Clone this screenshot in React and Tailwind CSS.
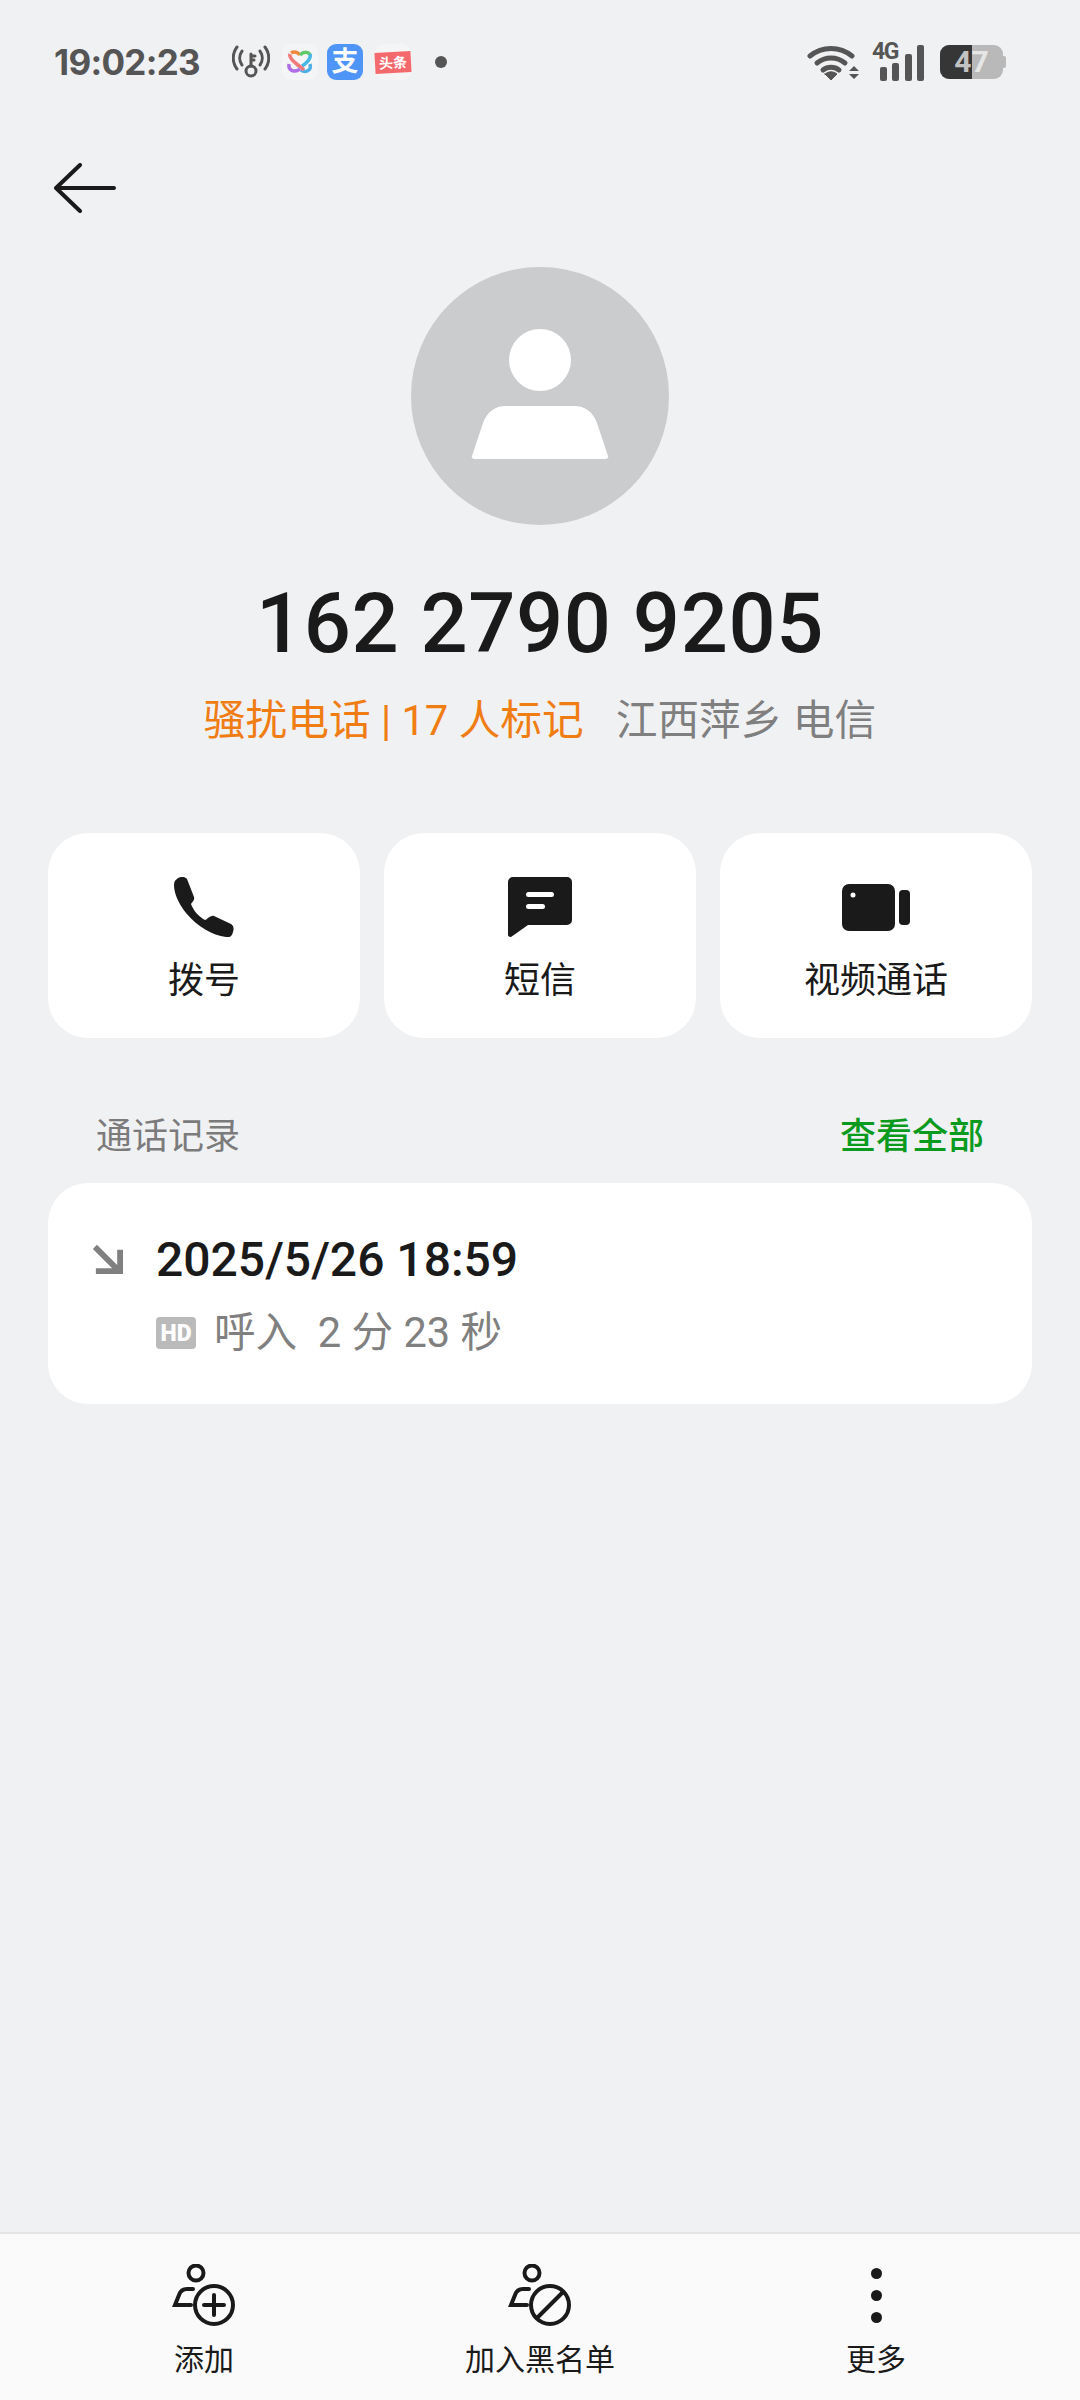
const CJK = "font-['Roboto','Noto_Sans_CJK_SC',sans-serif]"

function StatusBar() {
  return (
    <div className="flex h-[124px] items-center justify-between pl-[54px] pr-[74px]">
      <div className="flex items-center">
        <span className="w-[178px] font-['Inter',sans-serif] text-[35px] font-bold leading-none tracking-[-0.7px] text-[#555555]">19:02:23</span>
        {/* hotspot key */}
        <svg width="38" height="34" viewBox="0 0 38 34" fill="none" stroke="#555" strokeWidth="3" strokeLinecap="round">
          <circle cx="19" cy="26" r="5" />
          <path d="M19 21V9M19 11h4M19 15h3" />
          <path d="M10 6a12 12 0 0 0 0 14M5 2a18 18 0 0 0 0 22M28 6a12 12 0 0 1 0 14M33 2a18 18 0 0 1 0 22" />
        </svg>
        {/* colourful app icon */}
        <svg className="ml-[12px]" width="36" height="36" viewBox="0 0 36 36" fill="none" strokeWidth="3.5">
          <rect width="36" height="36" rx="9" fill="#f4f5f6" />
          <path d="M9 9c5-3 9 2 9 2" stroke="#f08a3c" />
          <path d="M18 11c4-4 9-3 10 0" stroke="#62c96a" />
          <path d="M28 10c2 6-8 12-8 12" stroke="#47b7e8" />
          <path d="M28 20c2 7-5 9-9 6" stroke="#4fb0e8" />
          <path d="M8 10c-2 5 10 12 14 16" stroke="#f07a7a" />
          <path d="M7 20c-1 7 6 9 11 5" stroke="#b06ee8" />
        </svg>
        {/* alipay */}
        <div className={`ml-[9px] flex h-[36px] w-[36px] items-center justify-center rounded-[9px] bg-[#4f94f7] text-[27px] font-bold leading-none text-white ${CJK}`}>支</div>
        {/* toutiao */}
        <div className="ml-[12px] flex h-[36px] w-[36px] items-center rounded-[9px] bg-[#f5f5f6]">
          <div className={`flex h-[21px] w-[36px] -rotate-3 items-center justify-center bg-[#f46a6c] text-[14px] font-bold leading-none text-white ${CJK}`}>头条</div>
        </div>
        <div className="ml-[24px] h-[12px] w-[12px] rounded-full bg-[#555555]" />
      </div>
      <div className="flex items-center">
        {/* wifi */}
        <svg width="52" height="38" viewBox="0 0 52 38" fill="none" stroke="#555" strokeWidth="5" strokeLinecap="round">
          <path d="M3 13a33 33 0 0 1 42 0" />
          <path d="M10 20a22 22 0 0 1 28 0" />
          <path d="M16 27a13 13 0 0 1 16 0" />
          <path d="M18 31l6 6 6-6a9 9 0 0 0-12 0z" fill="#555" strokeWidth="1" />
          <path d="M42 28l5-5 5 5zM42 31l5 5 5-5z" fill="#555" stroke="none" />
        </svg>
        {/* signal */}
        <div className="relative ml-[13px] h-[38px] w-[52px]">
          <span className="absolute left-0 top-[-3px] font-['Roboto',sans-serif] text-[23px] font-bold leading-none tracking-[-1.5px] text-[#555555]">4G</span>
          <div className="flex h-full items-end justify-end gap-[5.5px]">
            <div className="h-[14px] w-[7px] rounded-[2px] bg-[#555555]" />
            <div className="h-[18px] w-[7px] rounded-[2px] bg-[#555555]" />
            <div className="h-[27px] w-[7px] rounded-[2px] bg-[#555555]" />
            <div className="h-[36px] w-[7px] rounded-[2px] bg-[#555555]" />
          </div>
        </div>
        {/* battery */}
        <div className="relative ml-[16px] flex h-[34px] w-[63px] overflow-hidden rounded-[9px] bg-[#b9b9b9]">
          <div className="h-full w-[32px] bg-[#363636]" />
          <span className="absolute inset-0 flex items-center justify-center font-['Roboto',sans-serif] text-[30px] font-bold leading-none">
            <span className="text-[#c2c2c2]">4</span>
            <span className="text-[#e6e6e6]">7</span>
          </span>
        </div>
        <div className="h-[12px] w-[3px] rounded-r-[2px] bg-[#b9b9b9]" />
      </div>
    </div>
  )
}

function ActionCard({ icon, label }) {
  return (
    <div className="flex h-[205px] flex-col items-center rounded-[40px] bg-white">
      <div className="flex h-[108px] items-end justify-center pb-[4px]">{icon}</div>
      <span className={`mt-[18px] text-[36px] leading-[44px] text-[#1a1a1a] ${CJK}`}>{label}</span>
    </div>
  )
}

function BottomAction({ icon, label }) {
  return (
    <div className="flex flex-col items-center">
      <div className="flex h-[62px] items-center justify-center">{icon}</div>
      <span className={`mt-[14px] text-[30px] leading-[40px] text-[#1a1a1a] ${CJK}`}>{label}</span>
    </div>
  )
}

function PersonBadge({ children }) {
  return (
    <svg width="64" height="62" viewBox="0 0 64 62" fill="none" stroke="#1a1a1a" strokeWidth="4" strokeLinecap="round">
      <circle cx="24" cy="9" r="7.5" />
      <path d="M21 25h-6c-5 0-7 3-8 6l-4 10h16" />
      <circle cx="42" cy="41" r="19" />
      {children}
    </svg>
  )
}

export default function App() {
  return (
    <div className="flex h-[2400px] w-[1080px] flex-col overflow-hidden bg-[#f0f1f3]">
      <StatusBar />

      <div className="pl-[54px] pt-[39px]">
        <svg width="62" height="50" viewBox="0 0 62 50" fill="none" stroke="#1a1a1a" strokeWidth="4" strokeLinecap="round" strokeLinejoin="round">
          <path d="M60 25H2M26 2L2 25l24 23" />
        </svg>
      </div>

      {/* avatar */}
      <div className="mt-[54px] flex justify-center">
        <div className="flex h-[258px] w-[258px] items-center justify-center rounded-full bg-[#cbccce]">
          <svg className="mb-[4px]" width="138" height="130" viewBox="0 0 138 130" fill="white">
            <circle cx="69" cy="31" r="31" />
            <path d="M35 77h68c11 0 19 6 23 17l11 33c1 2-1 3-3 3H4c-2 0-4-1-3-3l11-33c4-11 12-17 23-17z" />
          </svg>
        </div>
      </div>

      <div className="mt-[51px] text-center font-['Roboto',sans-serif] text-[83px] font-medium leading-[96px] tracking-[0.6px] text-[#1a1a1a]">162 2790 9205</div>

      <div className={`mt-[22px] flex h-[54px] items-center justify-center text-[41.7px] leading-none ${CJK}`}>
        <span className="text-[#f07d13]">骚扰电话 | 17 人标记</span>
        <span className="ml-[32px] text-[#7f7f7f]">江西萍乡 电信</span>
      </div>

      {/* actions */}
      <div className="mt-[85px] grid grid-cols-3 gap-[24px] px-[48px]">
        <ActionCard
          label="拨号"
          icon={
            <svg width="60" height="60" viewBox="0 0 60 60" fill="#1a1a1a">
              <path d="M3 2C5-.5 11-1 13 2l7 18c1 3-2 5-3 7 2 6 8 13 14 16 2 0 5-5 9-4l17 8c3 2 3 5 2 8-1 4-3 6-7 5C38 58 24 50 12 36 4 26 0 16 0 8c0-3 1-5 3-6z" />
            </svg>
          }
        />
        <ActionCard
          label="短信"
          icon={
            <svg width="64" height="60" viewBox="0 0 64 60" fill="#1a1a1a">
              <path d="M5 0h54a5 5 0 0 1 5 5v38a5 5 0 0 1-5 5H20L3 60c-2 0-3-1-3-2V5a5 5 0 0 1 5-5z" />
              <rect x="18" y="15" width="28" height="5" rx="2.5" fill="white" />
              <rect x="18" y="27" width="19" height="5" rx="2.5" fill="white" />
            </svg>
          }
        />
        <ActionCard
          label="视频通话"
          icon={
            <svg width="68" height="47" viewBox="0 0 68 47" fill="#1a1a1a" className="mb-[6px]">
              <rect width="53" height="47" rx="7" />
              <rect x="57" y="6" width="11" height="35" rx="4" />
              <circle cx="11" cy="11" r="2.5" fill="white" />
            </svg>
          }
        />
      </div>

      {/* call log */}
      <div className="mt-[70px] flex h-[58px] items-center justify-between px-[96px]">
        <span className={`text-[36px] leading-none text-[#7b7b7b] ${CJK}`}>通话记录</span>
        <span className={`text-[36px] font-medium leading-none text-[#0a9a1d] ${CJK}`}>查看全部</span>
      </div>
      <div className="mx-[48px] mt-[17px] flex h-[221px] rounded-[40px] bg-white pl-[44px] pt-[49px]">
        <svg className="mt-[12px]" width="31" height="31" viewBox="0 0 32 32" fill="none" stroke="#808080" strokeWidth="6">
          <path d="M3 3l25 25M4 28h25V6" />
        </svg>
        <div className="ml-[33px]">
          <div className="font-['Roboto',sans-serif] text-[48px] font-medium leading-[56px] text-[#1a1a1a]">2025/5/26 18:59</div>
          <div className="mt-[21px] flex items-center">
            <span className="flex h-[32px] w-[40px] items-center justify-center rounded-[4px] bg-[#bababa] font-['Roboto',sans-serif] text-[23px] font-black leading-none text-white">HD</span>
            <span className={`ml-[18px] text-[41.6px] leading-[48px] text-[#808080] ${CJK}`}>呼入&nbsp; 2 分 23 秒</span>
          </div>
        </div>
      </div>

      {/* bottom bar */}
      <div className="mt-auto grid h-[168px] grid-cols-3 gap-[24px] border-t-2 border-[#e4e4e4] bg-[#fafafa] px-[48px] pt-[30px]">
        <BottomAction
          label="添加"
          icon={<PersonBadge><path d="M42 31v20M32 41h20" /></PersonBadge>}
        />
        <BottomAction
          label="加入黑名单"
          icon={<PersonBadge><path d="M29 54l26-26" /></PersonBadge>}
        />
        <BottomAction
          label="更多"
          icon={
            <div className="flex flex-col gap-[11px]">
              <div className="h-[11px] w-[11px] rounded-full bg-[#1a1a1a]" />
              <div className="h-[11px] w-[11px] rounded-full bg-[#1a1a1a]" />
              <div className="h-[11px] w-[11px] rounded-full bg-[#1a1a1a]" />
            </div>
          }
        />
      </div>
    </div>
  )
}
